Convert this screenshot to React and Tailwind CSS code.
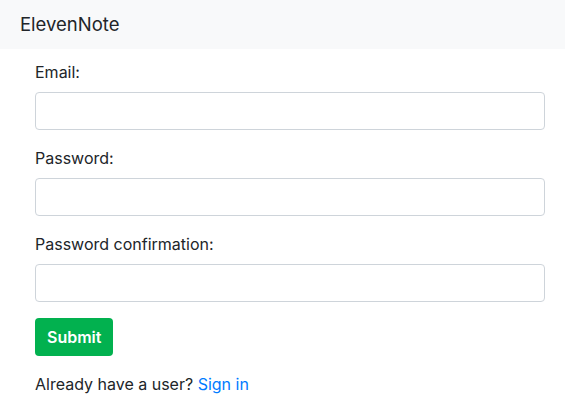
import React from 'react';

const Field = ({ label, type }) => (
  <div className="mb-4">
    <label className="block mb-2 leading-6">{label}</label>
    <input
      type={type}
      className="block w-full h-[38px] px-3 border border-[#ced4da] rounded-[4px] bg-white outline-none"
    />
  </div>
);

const App = () => {
  return (
    <div className="min-h-screen bg-white text-[#212529] text-base" style={{ fontFamily: 'Inter, "Liberation Sans", Arial, sans-serif' }}>
      <nav className="h-[49px] bg-[#f8f9fa] flex items-center px-5">
        <span className="text-[18.5px] leading-none">ElevenNote</span>
      </nav>

      <div className="w-[510px] ml-[35px] pt-[11px]">
        <form onSubmit={e => e.preventDefault()}>
          <Field label="Email:" type="email" />
          <Field label="Password:" type="password" />
          <Field label="Password confirmation:" type="password" />
          <button
            type="submit"
            className="h-[38px] px-3 rounded-[4px] bg-[#02b14f] text-white font-semibold leading-6"
          >
            Submit
          </button>
        </form>
        <p className="mt-4 leading-6">
          Already have a user? <a href="#" className="text-[#007bff]">Sign in</a>
        </p>
      </div>
    </div>
  );
};

export default App;
